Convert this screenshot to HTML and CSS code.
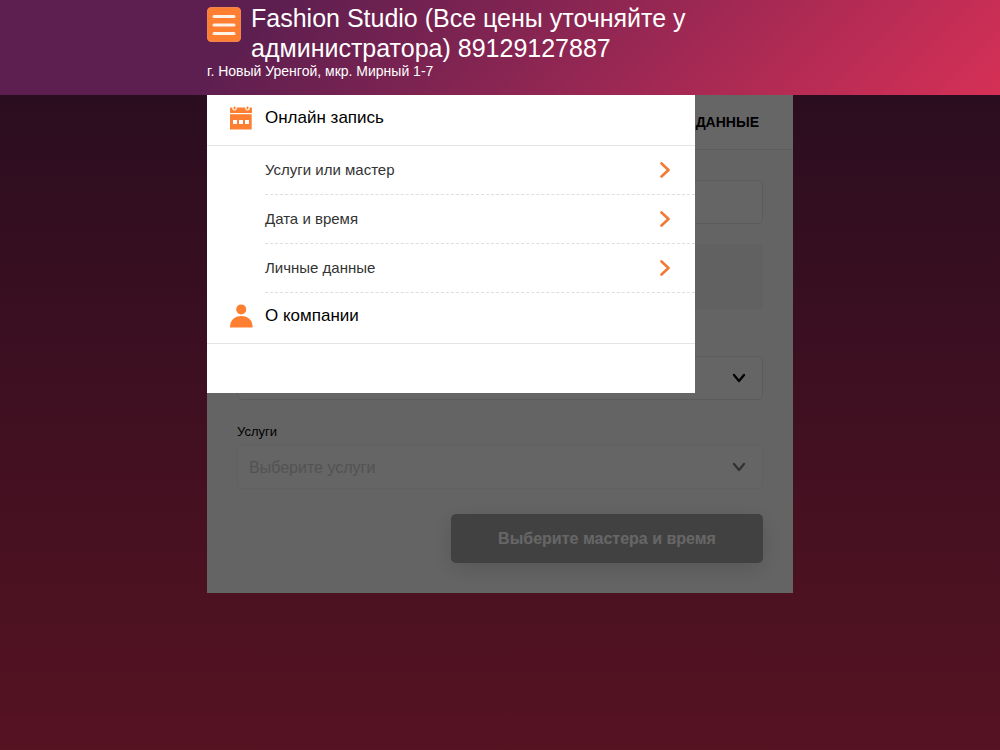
FILE: index.html
```html
<!DOCTYPE html>
<html lang="ru">

<head>
  <meta charset="utf-8">
  <meta name="viewport" content="width=device-width, initial-scale=1">
  <title>Fashion Studio</title>
  <link rel="stylesheet" href="styles.css">
</head>

<body>
  <header class="header">
    <div class="container">
      <div class="header-top">
        <button type="button" class="menu-btn" aria-expanded="true" aria-controls="menu" aria-labelledby="title">
          <svg width="24" height="22" viewBox="0 0 24 22" fill="none" stroke="#fff2e8" stroke-width="3" stroke-linecap="round">
            <path d="M2 2.5h20M2 11h20M2 19.5h20"/>
          </svg>
        </button>
        <h1 class="title" id="title">Fashion Studio (Все цены уточняйте у администратора) 89129127887</h1>
      </div>
      <p class="address">г. Новый Уренгой, мкр. Мирный 1-7</p>
    </div>
  </header>

  <main class="main">
    <div class="container content">
      <form class="panel">
        <h2 class="panel-title">ДАННЫЕ</h2>
        <div class="panel-body">
          <input type="text" class="field" aria-labelledby="menu-personal">
          <div class="notice"></div>
          <div class="select-wrap">
            <select class="field" aria-labelledby="menu-services"></select>
            <svg class="arrow" width="14" height="10" viewBox="0 0 14 10" fill="none" stroke="#000" stroke-width="2.3" stroke-linecap="round" stroke-linejoin="round">
              <path d="M2 2l5 6l5-6"/>
            </svg>
          </div>
          <label class="label" for="services">Услуги</label>
          <div class="select-wrap disabled">
            <select class="field" id="services" disabled>
              <option>Выберите услуги</option>
            </select>
            <svg class="arrow" width="14" height="10" viewBox="0 0 14 10" fill="none" stroke="#000" stroke-width="2.3" stroke-linecap="round" stroke-linejoin="round">
              <path d="M2 2l5 6l5-6"/>
            </svg>
          </div>
          <button type="submit" class="submit" disabled>Выберите мастера и время</button>
        </div>
      </form>
    </div>

    <!-- opened menu -->
    <div class="overlay">
      <div class="container">
        <nav class="menu" id="menu">
          <a href="#" class="menu-item">
            <svg width="24" height="24" viewBox="0 0 24 24">
              <path fill="#ff7f32" d="M1 7V2.500q0-1 1-1h1.200q0 3 2.300 3t2.300-3h8.400q0 3 2.300 3t2.300-3h1.200q1 0 1 1V7z"/>
              <path fill="#ff7f32" d="M1 8.200h21.700v15.300H1z"/>
              <path stroke="#ff7f32" stroke-width="2" stroke-linecap="round" d="M5.500 1.500v1M18.500 1.500v1"/>
              <path fill="#fff" d="M4 14h4v4h-4zM10 14h4v4h-4zM16 14h4v4h-4z"/>
            </svg>
            <span>Онлайн запись</span>
          </a>
          <div class="submenu">
            <a href="#" class="submenu-item">
              <span id="menu-services">Услуги или мастер</span>
              <svg width="10" height="16" viewBox="0 0 10 16" fill="none" stroke="#f07b34" stroke-width="2.6" stroke-linecap="round" stroke-linejoin="round">
                <path d="M1.500 1.500l7 6.500l-7 6.500"/>
              </svg>
            </a>
            <a href="#" class="submenu-item">
              <span>Дата и время</span>
              <svg width="10" height="16" viewBox="0 0 10 16" fill="none" stroke="#f07b34" stroke-width="2.6" stroke-linecap="round" stroke-linejoin="round">
                <path d="M1.500 1.500l7 6.500l-7 6.500"/>
              </svg>
            </a>
            <a href="#" class="submenu-item">
              <span id="menu-personal">Личные данные</span>
              <svg width="10" height="16" viewBox="0 0 10 16" fill="none" stroke="#f07b34" stroke-width="2.6" stroke-linecap="round" stroke-linejoin="round">
                <path d="M1.500 1.500l7 6.500l-7 6.500"/>
              </svg>
            </a>
          </div>
          <a href="#" class="menu-item">
            <svg width="24" height="24" viewBox="0 0 24 24" fill="#ff7f32">
              <circle cx="12.200" cy="5.400" r="5"/>
              <path d="M1 23.500c0-7.500 4.500-11.500 11.300-11.500s11.300 4 11.300 11.500z"/>
            </svg>
            <span>О компании</span>
          </a>
        </nav>
      </div>
    </div>
  </main>
</body>

</html>
```
FILE: styles.css
```css
* {
  box-sizing: border-box;
}

body {
  display: flex;
  flex-direction: column;
  min-height: 100vh;
  margin: 0;
  font-family: "Liberation Sans", Arial, sans-serif;
  color: #000;
  background: linear-gradient(180deg, #5d1f50 0%, #d63056 100%);
}

a {
  color: inherit;
  text-decoration: none;
}

.container {
  width: 100%;
  max-width: 586px;
  margin: 0 auto;
}

/* Header */
.header {
  padding: 3px 0 15px;
  color: #fff;
  background: linear-gradient(135deg, #5d1f50 26%, #d63056 100%);
}

.header-top {
  display: flex;
  align-items: flex-start;
  gap: 10px;
}

.menu-btn {
  display: flex;
  align-items: center;
  justify-content: center;
  flex: none;
  width: 34px;
  height: 35px;
  margin-top: 4px;
  padding: 0;
  border: 1px solid #ef8550;
  border-radius: 4px;
  background: #ff7f32;
  cursor: pointer;
}

.title {
  max-width: 480px;
  margin: 0;
  font-size: 25px;
  font-weight: 400;
  line-height: 30px;
}

.address {
  margin: 0;
  font-size: 14px;
  line-height: 17px;
}

/* Booking form */
.main {
  position: relative;
  flex: 1;
}

.panel {
  background: #fbfbfb;
}

.panel-title {
  margin: 0;
  padding: 0 34px;
  border-bottom: 1px solid #e9e9e9;
  background: #fff;
  font-size: 14px;
  line-height: 54px;
  text-align: right;
}

.panel-body {
  display: flex;
  flex-direction: column;
  padding: 30px;
}

.field {
  width: 100%;
  height: 44px;
  padding: 0 11px;
  border: 1px solid #e4e4e4;
  border-radius: 5px;
  background: #fcfcfc;
  font-family: inherit;
  font-size: 16px;
  color: #000;
  appearance: none;
}

.notice {
  height: 66px;
  margin: 20px 0 46px;
  border-radius: 3px;
  background: #f3f3f3;
}

.select-wrap {
  position: relative;
}

.select-wrap.disabled .field {
  border-color: #f2f2f2;
  color: #cfcfcf;
  opacity: 1;
}

.select-wrap.disabled .arrow {
  opacity: 0.5;
}

.arrow {
  position: absolute;
  top: 17px;
  right: 17px;
  pointer-events: none;
}

.label {
  margin-top: 24px;
  padding-bottom: 5px;
  font-size: 13px;
  line-height: 16px;
}

.submit {
  align-self: flex-end;
  width: 312px;
  max-width: 100%;
  height: 49px;
  margin-top: 25px;
  border: 0;
  border-radius: 5px;
  background: #a4a4a4;
  box-shadow: 0 6px 24px rgba(0, 0, 0, 0.14);
  font-family: inherit;
  font-size: 16px;
  font-weight: 700;
  color: #fff;
}

/* Menu */
.overlay {
  position: absolute;
  inset: 0;
  background: rgba(0, 0, 0, 0.6);
}

.menu {
  width: 83.3333%;
  padding-bottom: 49px;
  background: #fff;
}

.menu-item {
  display: flex;
  align-items: center;
  gap: 12px;
  padding: 0 22px 4px;
  border-bottom: 1px solid #e4e4e4;
  font-size: 17px;
  line-height: 46px;
}

.submenu {
  margin-left: 58px;
}

.submenu-item {
  display: flex;
  align-items: center;
  justify-content: space-between;
  padding-right: 25px;
  border-bottom: 1px dashed #dedede;
  color: #333;
  font-size: 15px;
  line-height: 48px;
}
```
